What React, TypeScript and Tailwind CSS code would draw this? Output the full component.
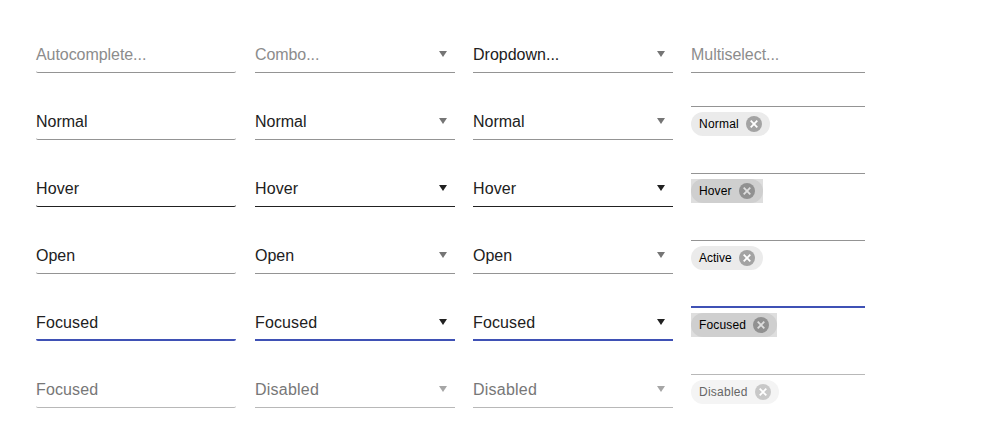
const rows = [
  { t: ["Autocomplete...", "Combo...", "Dropdown...", "Multiselect..."], s: "placeholder" },
  { t: ["Normal", "Normal", "Normal", "Normal"], s: "normal" },
  { t: ["Hover", "Hover", "Hover", "Hover"], s: "hover" },
  { t: ["Open", "Open", "Open", "Active"], s: "normal" },
  { t: ["Focused", "Focused", "Focused", "Focused"], s: "focus" },
  { t: ["Focused", "Disabled", "Disabled", "Disabled"], s: "disabled" },
];

const tracking: Record<string, string> = {
  "Autocomplete...": "tracking-[-0.06px]",
  "Combo...": "tracking-[-0.08px]",
  "Multiselect...": "tracking-[-0.05px]",
  Hover: "tracking-[0.1px]",
  Focused: "tracking-[0.12px]",
  Disabled: "tracking-[0.22px]",
};

const chipTracking: Record<string, string> = {
  Normal: "tracking-[0.22px] w-10",
  Hover: "tracking-[0.14px] w-[33px]",
  Active: "w-[33px]",
  Focused: "tracking-[0.14px] w-[47px]",
  Disabled: "tracking-[0.25px] w-[49px]",
};

function Arrow({ s }: { s: string }) {
  const fill = s === "hover" || s === "focus" ? "#212121" : s === "disabled" ? "#a6a6a6" : "#757575";
  return (
    <svg width="8" height="6" viewBox="0 0 8 6" className={`mr-2 ${s === "focus" ? "" : "mb-px"}`}>
      <path d="M0 0H8L4 6Z" fill={fill} />
    </svg>
  );
}

function Field({ text, s, col }: { text: string; s: string; col: number }) {
  const line =
    s === "focus" ? "border-b-2 border-[#3f51b5]" : s === "hover" ? "border-b border-[#212121]" : s === "disabled" ? "border-b border-[#b8b8b8]" : "border-b border-[#949494]";
  const color = s === "disabled" ? "text-[#777]" : s === "placeholder" && col !== 2 ? "text-[#8c8c8c]" : "text-[#212121]";
  const radius = col === 0 ? "rounded-[2px]" : "";
  return (
    <div className={`flex h-[37px] items-center justify-between ${line} ${radius} ${color}`}>
      <span className={`${s === "focus" ? "mt-[2px]" : "mt-px"} ${tracking[text] ?? ""}`}>{text}</span>
      {(col === 1 || col === 2) && <Arrow s={s} />}
    </div>
  );
}

function Multi({ text, s }: { text: string; s: string }) {
  const line = s === "focus" ? "h-[2px] bg-[#3f51b5] mt-[2px]" : s === "disabled" ? "h-px bg-[#b8b8b8] mt-[3px]" : "h-px bg-[#949494] mt-[3px]";
  const dark = s === "hover" || s === "focus";
  const disabled = s === "disabled";
  const chip = dark ? "bg-[#cfcfcf] text-black" : disabled ? "bg-[#f4f4f4] text-[#666]" : "bg-[#ebebeb] text-black";
  return (
    <div className="flex flex-col items-start">
      <div className={`w-full ${line}`} />
      <div className={`mt-[5px] ${dark ? "bg-[#dedede]" : ""}`}>
        <div className={`flex h-6 items-center gap-[7px] rounded-full px-2 text-xs ${chip}`}>
          <span className={`whitespace-nowrap ${chipTracking[text] ?? ""}`}>{text}</span>
          <svg width="16" height="16" viewBox="0 0 16 16">
            <circle cx="8" cy="8" r="8" fill={dark ? "#919191" : disabled ? "#c8c8c8" : "#a3a3a3"} />
            <path d="M4.7 4.7L11.3 11.3M11.3 4.7L4.7 11.3" stroke={dark ? "#dedede" : "#ffffff"} strokeWidth="1.8" />
          </svg>
        </div>
      </div>
    </div>
  );
}

export default function App() {
  return (
    <div className="h-[444px] w-[1008px] overflow-hidden bg-white pt-9 pl-9 font-['Liberation_Sans',Arial,sans-serif] text-base">
      {rows.map((r, i) => (
        <div key={i} className="grid h-[67px] grid-cols-[201px_200px_200px_174px] items-start gap-x-[18px]">
          {[0, 1, 2].map((c) => (
            <div key={c} className={c === 0 ? "mr-px" : ""}>
              <Field text={r.t[c]} s={r.s} col={c} />
            </div>
          ))}
          {i === 0 ? <Field text={r.t[3]} s={r.s} col={3} /> : <Multi text={r.t[3]} s={r.s} />}
        </div>
      ))}
    </div>
  );
}
